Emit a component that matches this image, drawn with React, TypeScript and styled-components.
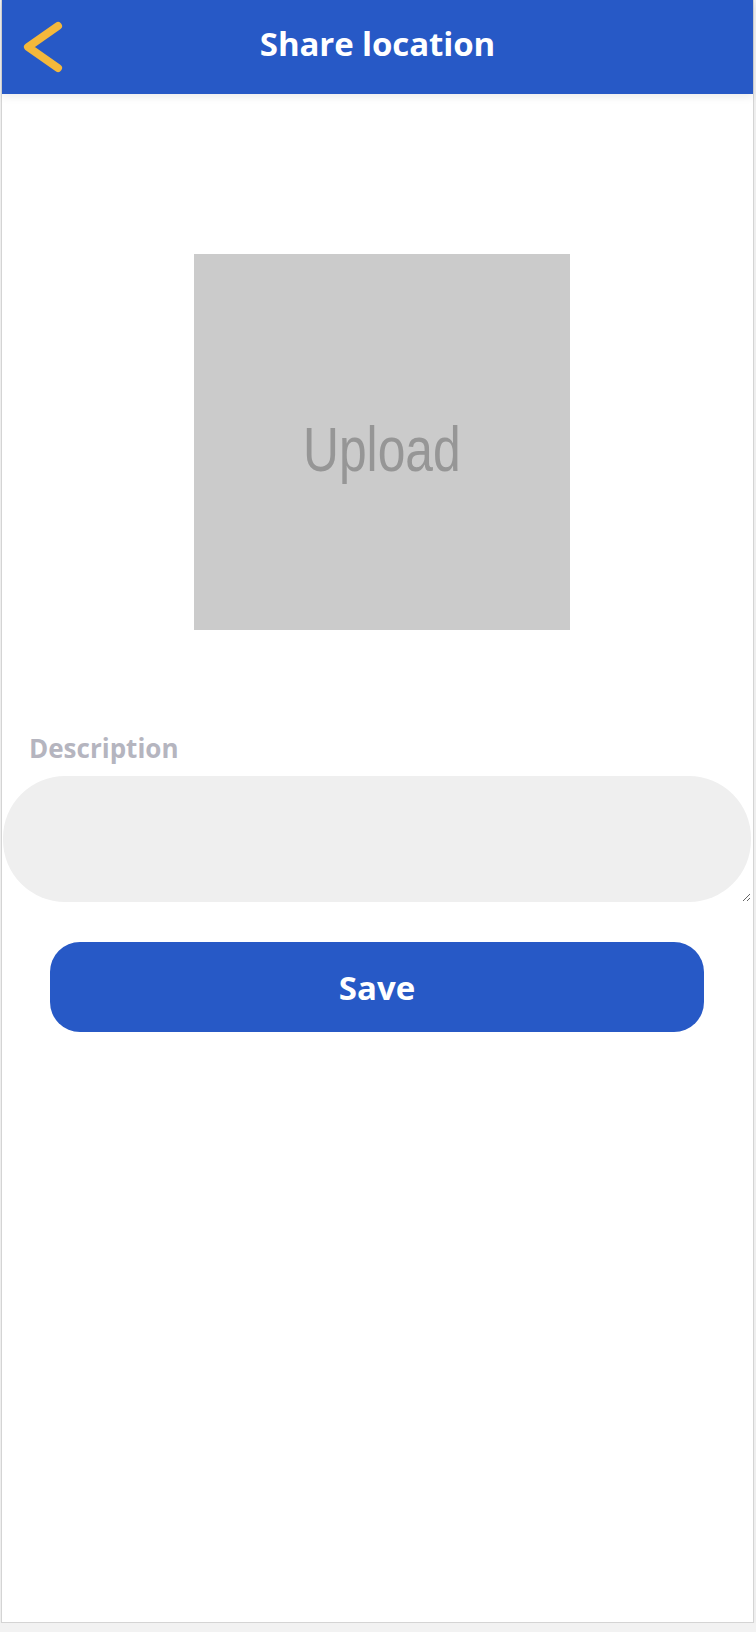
import React from "react";
import styled, { createGlobalStyle } from "styled-components";

const GlobalStyle = createGlobalStyle`
  html, body {
    margin: 0;
    padding: 0;
    background: #f2f2f2;
  }
  body {
    font-family: "Open Sans", "Liberation Sans", sans-serif;
  }
  * { box-sizing: border-box; }
`;

const Frame = styled.div`
  width: 753px;
  height: 1623px;
  margin-left: 1px;
  background: #ffffff;
  border: 1px solid #d4d4d4;
  border-top: none;
  display: flex;
  flex-direction: column;
  box-shadow: 0 3px 8px rgba(0, 0, 0, 0.04);
`;

const Header = styled.header`
  height: 94px;
  flex-shrink: 0;
  background: #2759c6;
  display: grid;
  grid-template-columns: 94px 1fr 94px;
  align-items: center;
  box-shadow: 0 3px 8px rgba(0, 0, 0, 0.08);
  position: relative;
  z-index: 1;
`;

const BackButton = styled.button`
  width: 64px;
  height: 94px;
  padding: 0 0 0 20px;
  border: none;
  background: transparent;
  display: flex;
  align-items: center;
  cursor: pointer;
`;

const Title = styled.h1`
  margin: 0;
  text-align: center;
  color: #ffffff;
  font-family: "Open Sans", "Liberation Sans", sans-serif;
  font-weight: 700;
  font-size: 33px;
  line-height: 1;
  letter-spacing: -0.1px;
  padding-bottom: 8px;
`;

const Body = styled.main`
  display: flex;
  flex-direction: column;
`;

const UploadBox = styled.button`
  width: 376px;
  height: 376px;
  margin: 160px 0 0 192px;
  padding: 0;
  border: none;
  background: #cbcbcb;
  display: flex;
  align-items: center;
  justify-content: center;
  cursor: pointer;
`;

const UploadText = styled.span`
  display: inline-block;
  color: #969696;
  font-family: "Liberation Sans", Arial, sans-serif;
  font-size: 63px;
  line-height: 1;
  transform: scaleX(0.79);
  margin-top: 14px;
`;

const Label = styled.label`
  margin: 105px 0 0 27px;
  color: #b5b5bf;
  font-family: "Open Sans", "Liberation Sans", sans-serif;
  font-weight: 700;
  font-size: 26px;
  line-height: 1;
`;

const TextArea = styled.textarea`
  display: block;
  width: 748px;
  height: 126px;
  margin: 15px 0 0 1px;
  border: none;
  border-radius: 62px;
  background: #efefef;
  padding: 20px 40px;
  font-family: "Open Sans", "Liberation Sans", sans-serif;
  font-size: 22px;
  outline: none;
`;

const SaveButton = styled.button`
  width: 654px;
  height: 90px;
  margin: 40px 0 0 48px;
  border: none;
  border-radius: 30px;
  background: #2759c6;
  color: #ffffff;
  font-family: "Open Sans", "Liberation Sans", sans-serif;
  font-weight: 700;
  font-size: 33px;
  cursor: pointer;
`;

const Chevron = () => (
  <svg width="44" height="58" viewBox="0 0 44 58" fill="none">
    <polyline
      points="36,8 6,29 36,50"
      stroke="#f4b83b"
      strokeWidth="8"
      strokeLinecap="round"
      strokeLinejoin="round"
    />
  </svg>
);

export default function App() {
  return (
    <>
      <GlobalStyle />
      <Frame>
        <Header>
          <BackButton aria-label="Back">
            <Chevron />
          </BackButton>
          <Title>Share location</Title>
          <span />
        </Header>
        <Body>
          <UploadBox>
            <UploadText>Upload</UploadText>
          </UploadBox>
          <Label htmlFor="desc">Description</Label>
          <TextArea id="desc" />
          <SaveButton>Save</SaveButton>
        </Body>
      </Frame>
    </>
  );
}
